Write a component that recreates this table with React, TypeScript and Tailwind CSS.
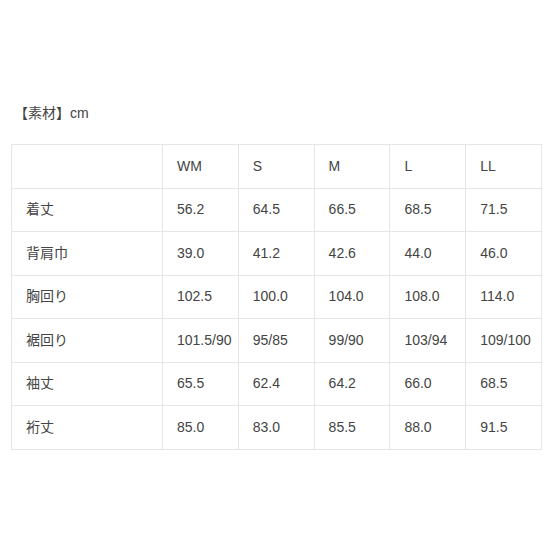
const header = ['', 'WM', 'S', 'M', 'L', 'LL'];

const rows = [
  ['着丈', '56.2', '64.5', '66.5', '68.5', '71.5'],
  ['背肩巾', '39.0', '41.2', '42.6', '44.0', '46.0'],
  ['胸回り', '102.5', '100.0', '104.0', '108.0', '114.0'],
  ['裾回り', '101.5/90', '95/85', '99/90', '103/94', '109/100'],
  ['袖丈', '65.5', '62.4', '64.2', '66.0', '68.5'],
  ['裄丈', '85.0', '83.0', '85.5', '88.0', '91.5'],
];

const App = () => {
  return (
    <div
      className="h-[552px] w-[552px] bg-white pl-[11px] pt-[103px] text-[14px] text-[#444]"
      style={{ fontFamily: '"Liberation Sans", "Noto Sans CJK JP", sans-serif' }}
    >
      <p className="pl-[3px] leading-[20px]">【素材】cm</p>
      <table className="mt-[21px] w-[531px] table-fixed border-collapse">
        <colgroup>
          <col className="w-[151px]" />
          <col />
          <col />
          <col />
          <col />
          <col />
        </colgroup>
        <tbody>
          <tr className="h-[43.5px]">
            {header.map((h, i) => (
              <td key={i} className="whitespace-nowrap border border-[#e6e6e6] pl-[14px] align-middle">
                {h}
              </td>
            ))}
          </tr>
          {rows.map((row) => (
            <tr key={row[0]} className="h-[43.5px]">
              {row.map((cell, i) => (
                <td key={i} className="whitespace-nowrap border border-[#e6e6e6] pl-[14px] align-middle">
                  {cell}
                </td>
              ))}
            </tr>
          ))}
        </tbody>
      </table>
    </div>
  );
};

export default App;
